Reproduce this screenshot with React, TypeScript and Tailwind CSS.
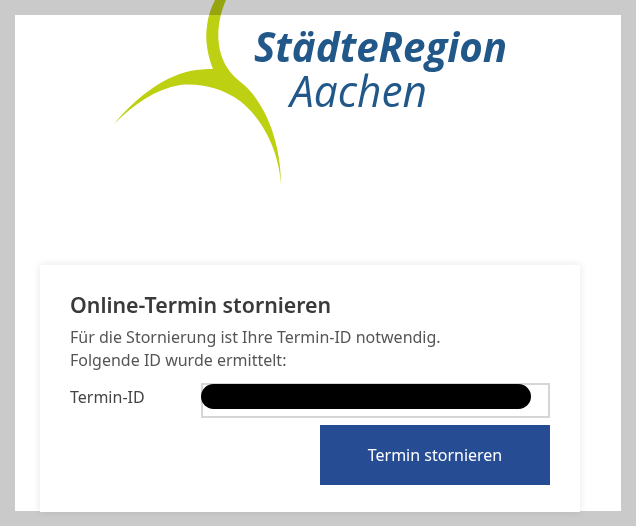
const arc =
  "M226 0 C218 18 216 38 221 54 C225 68 233 76 243 84 C264 102 281 140 281 185 C279 150 262 118 240 101 C222 88 200 83 180 85 C156 89 134 104 114 124 C134 100 160 78 190 71 C198 69.5 206 69 213 69 C207 54 205 38 207 26 C208 16 211 8 215 0 Z";

export default function App() {
  return (
    <div className="h-[526px] w-[636px] overflow-hidden bg-[#cacaca] p-[15px] font-['Noto_Sans',sans-serif]">
      <div className="relative h-[496px] w-[606px] bg-white px-[25px] pt-[250px]">
        <svg
          className="absolute left-[-15px] top-[-15px] mix-blend-multiply"
          width="636"
          height="200"
          viewBox="0 0 636 200"
        >
          <path d={arc} fill="#bdd012" />
          <text x="254" y="62" fontFamily="'Open Sans', sans-serif" fontStyle="italic" fontWeight="700" fontSize="42" fill="#215889" textLength="253" lengthAdjust="spacingAndGlyphs">
            StädteRegion
          </text>
          <text x="290" y="107" fontFamily="'Open Sans', sans-serif" fontStyle="italic" fontWeight="400" fontSize="43" fill="#215889" textLength="137" lengthAdjust="spacingAndGlyphs">
            Aachen
          </text>
        </svg>
        <div className="relative h-[247px] w-[540px] bg-white px-[30px] pt-[26px] shadow-[0_0_8px_rgba(0,0,0,0.1)]">
          <h1 className="text-[21.33px] leading-[28px] font-semibold text-[#3a3a3a]">Online-Termin stornieren</h1>
          <p className="mt-[7px] text-[16px] leading-[23px] text-[#555]">
            Für die Stornierung ist Ihre Termin-ID notwendig.
            <br />
            Folgende ID wurde ermittelt:
          </p>
          <div className="mt-[11px] flex items-start">
            <label className="mt-[3px] w-[131px] text-[16px] leading-[22px] text-[#444]">Termin-ID</label>
            <div className="h-[35px] w-[349px] border-2 border-[#d6d6d6]">
              <div className="-mt-[1px] -ml-[2px] h-[25px] w-[330px] rounded-[13px] bg-black" />
            </div>
          </div>
          <div className="mt-[7px] flex justify-end">
            <button className="h-[60px] w-[230px] bg-[#264c94] text-[16px] text-white">Termin stornieren</button>
          </div>
        </div>
      </div>
    </div>
  );
}
